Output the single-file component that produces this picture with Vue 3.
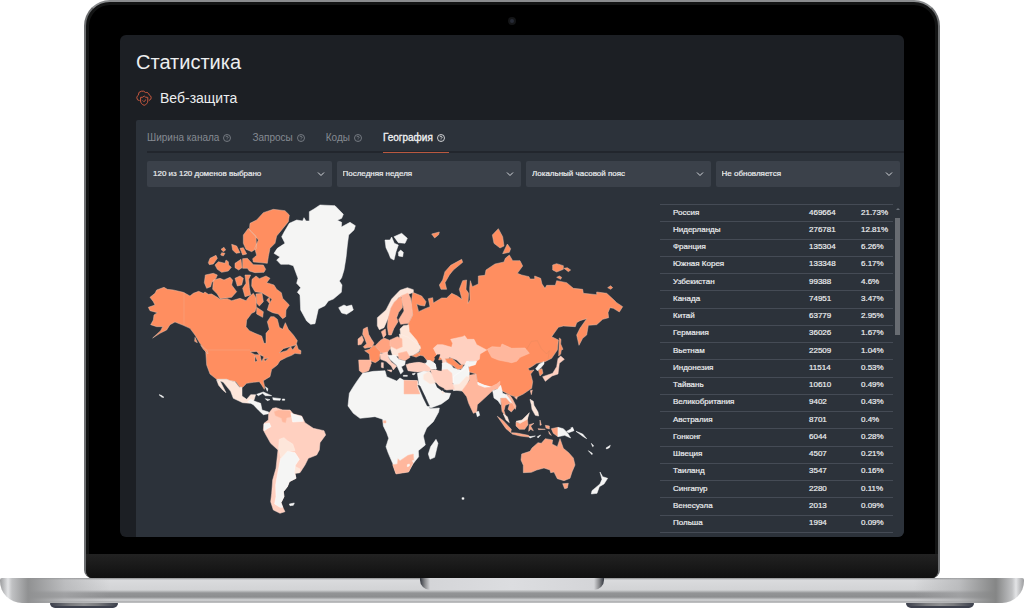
<script setup>
import { ref } from 'vue'

const tabs = ['Ширина канала', 'Запросы', 'Коды', 'География']
const active = ref('География')

const filters = [
  { id: 'domains', label: 'Домены', value: '120 из 120 доменов выбрано' },
  { id: 'period', label: 'Период', value: 'Последняя неделя' },
  { id: 'zone', label: 'Часовой пояс', value: 'Локальный часовой пояс' },
  { id: 'refresh', label: 'Обновление', value: 'Не обновляется' }
]

const rows = [
  ['Россия', '469664', '21.73%'],
  ['Нидерланды', '276781', '12.81%'],
  ['Франция', '135304', '6.26%'],
  ['Южная Корея', '133348', '6.17%'],
  ['Узбекистан', '99388', '4.6%'],
  ['Канада', '74951', '3.47%'],
  ['Китай', '63779', '2.95%'],
  ['Германия', '36026', '1.67%'],
  ['Вьетнам', '22509', '1.04%'],
  ['Индонезия', '11514', '0.53%'],
  ['Тайвань', '10610', '0.49%'],
  ['Великобритания', '9402', '0.43%'],
  ['Австралия', '8701', '0.4%'],
  ['Гонконг', '6044', '0.28%'],
  ['Швеция', '4507', '0.21%'],
  ['Таиланд', '3547', '0.16%'],
  ['Сингапур', '2280', '0.11%'],
  ['Венесуэла', '2013', '0.09%'],
  ['Польша', '1994', '0.09%']
]
</script>

<template>
  <div class="laptop">
    <div class="lid">
      <div class="camera-bar"><span class="camera"></span></div>
      <main class="screen">
        <h1>Статистика</h1>
        <h2>
          <svg class="cloud" viewBox="0 0 16 16" aria-hidden="true">
            <path d="M3.6 10.6A2.9 2.9 0 0 1 .8 7.8 2.8 2.8 0 0 1 2.4 5.2 3.6 3.6 0 0 1 5.4 1.2 4 4 0 0 1 9.6 2.6 2.7 2.7 0 0 1 13.2 5 2.9 2.9 0 0 1 15.2 7.8 2.8 2.8 0 0 1 13 10.4" />
            <path d="M8.2 6 9.6 7.2 11.8 7.4V11C11.8 13.2 10.2 14.6 8.2 15.3 6.2 14.6 4.6 13.2 4.6 11V7.4L6.8 7.2Z" />
            <path d="m6.6 10.4 1.3 1.3 2.2-2.2" />
          </svg>
          Веб-защита
        </h2>
        <section class="panel">
          <div class="tabs" role="tablist">
            <button v-for="tab in tabs" :key="tab" type="button" role="tab" class="tab"
              :class="{ active: tab === active }" :aria-selected="tab === active" @click="active = tab">
              {{ tab }}
              <svg class="help" viewBox="0 0 8 8" aria-hidden="true">
                <circle cx="4" cy="4" r="3.5" />
                <path d="M3 3.2a1 1 0 1 1 1.5.9Q4 4.3 4 4.8M4 5.6v.6" />
              </svg>
            </button>
          </div>
          <div class="filters">
            <div v-for="f in filters" :key="f.id" class="filter">
              <select :id="f.id" :aria-label="f.label"><option>{{ f.value }}</option></select>
              <svg class="chevron" viewBox="0 0 8 6" aria-hidden="true"><path d="m1 1.5 3 3 3-3" /></svg>
            </div>
          </div>
          <div class="content">
            <svg class="map" viewBox="147 195 500 330" role="img" aria-label="География запросов">
              <!-- North America -->
              <g class="top" transform="translate(140 200) scale(.33333)">
                <path d="M30 292 45 280 50 270 72 262 82 268 100 270 130 277 150 288 160 280 176 274 190 280 195 276 205 283 215 282 232 292 240 298 262 296 275 302 300 295 318 302 326 292 333 286 340 280 348 293 349 322 345 335 335 340 320 360 318 380 328 392 345 400 365 408 372 430 378 430 378 400 388 388 382 365 392 350 402 350 412 358 418 382 428 388 436 368 445 388 460 405 472 422 468 435 450 440 430 446 418 458 440 452 452 440 458 450 470 433 475 448 483 452 482 462 465 460 455 466 440 472 420 482 412 495 395 508 390 530 370 542 374 560 373 568 365 555 358 545 340 547 320 550 308 562 300 562 288 545 270 542 260 538 230 538 210 522 200 495 197 452 180 430 165 405 150 385 130 376 105 366 90 374 80 390 60 400 38 414 62 392 68 380 50 380 32 374 40 360 42 345 52 338 30 332 25 322 45 315 40 305Z" />
                <path d="M330 70 350 60 370 38 400 28 435 32 448 45 445 65 425 90 410 108 405 130 390 145 385 170 382 190 340 186 338 176 350 166 344 145 355 120 345 108 328 90ZM310 105 325 85 335 95 348 108 350 145 335 155 318 148 310 130ZM205 188 210 175 228 166 232 175 220 192 208 194ZM243 148 252 142 257 150 250 155ZM245 158 255 160 250 168 242 165ZM275 133 290 138 300 158 288 160 278 150ZM300 145 310 143 320 162 308 165ZM225 195 235 185 255 190 258 180 265 185 266 195 274 202 265 213 245 217 232 208ZM285 190 303 178 306 203 296 210 285 203ZM308 176 322 175 340 194 370 195 377 208 372 217 345 218 328 213 322 205 308 205ZM196 225 220 220 232 225 228 235 215 248 212 260 200 265 193 248ZM220 240 240 235 252 240 270 232 278 240 275 255 290 275 275 292 240 296 232 282 218 268ZM285 235 300 228 310 235 305 255 292 258ZM315 225 332 225 326 238 328 262 332 285 315 290 308 265 318 250ZM336 238 348 228 358 236 378 228 390 235 380 248 402 255 410 268 424 278 428 295 448 315 438 330 437 350 428 356 415 342 398 338 382 330 388 310 380 300 388 292 365 278 345 275 335 258ZM348 282 366 280 370 305 358 318 350 310ZM350 322 370 335 368 352 350 342ZM165 412 172 428 164 424ZM182 435 202 452 204 462 190 448Z" />
                <path class="lake" d="M330 456 350 454 358 464 345 464ZM345 468 352 482 345 486ZM360 464 372 470 365 485 362 475ZM372 478 385 474 375 484ZM388 292 396 298 390 308Z" />
                <path class="thin" d="M197 450H330M132 277V376M338 452 360 456 368 468" />
              </g>
              <!-- Central and South America -->
              <g transform="translate(200 350) scale(.33333)">
                <path class="faint" d="M50 88 80 88 90 92 105 95 118 112 126 112 126 138 140 148 152 134 167 134 162 150 150 160 128 158 100 145 92 124 70 97ZM50 90 60 92 78 128 68 120 56 106Z" />
                <path class="none" d="M143 155 152 148 168 155 182 160 186 180 206 186 206 191 190 194 175 180 160 164ZM170 133 190 126 215 137 196 137 188 130 175 137ZM218 143 242 146 240 151 220 150ZM196 146 210 149 202 152ZM247 147h7v4h-7ZM196 110 204 116 202 124ZM268 462 283 459 280 466 270 467Z" />
                <path class="low" d="M206 190 218 175 228 173 248 180 270 180 280 192 305 198 315 218 340 235 372 242 377 255 360 278 358 300 350 315 325 325 315 345 300 368 285 370 288 385 268 395 262 410 250 425 252 440 243 458 250 475 255 485 240 490 220 480 212 455 215 430 218 390 228 355 234 300 212 280 198 255 190 240 192 220 205 210Z" />
                <path class="mid" d="M222 185 235 180 270 182 275 200 260 204 257 218 247 216 244 205 226 197Z" />
                <path class="none" d="M273 190 285 194 305 200 310 214 278 216ZM192 222 208 219 213 230 202 236 193 242ZM242 325 262 303 285 308 298 328 286 346 284 370 288 385 268 395 262 410 250 425 252 440 243 458 248 472 240 472 224 462 228 440 227 405 233 370Z" />
                <path class="faint" d="M238 268 252 263 262 272 278 282 285 302 262 303 243 325 236 295ZM286 350 300 357 297 368 284 370Z" />
              </g>
              <!-- Greenland, Iceland, Svalbard -->
              <g class="none" transform="translate(270 195) scale(.33333)">
                <path d="M118 50 132 42 150 30 195 32 220 58 215 70 202 76 215 82 214 96 240 82 256 92 252 105 236 120 232 150 228 188 222 225 215 248 208 258 216 270 214 292 190 312 175 318 165 332 145 342 135 386 122 388 110 378 92 345 90 300 82 292 92 278 80 265 84 250 70 212 56 208 32 208 20 195 30 186 12 175 22 160 45 145 35 125 42 112 58 85 80 75 98 78 102 68 108 78 118 78ZM206 338 222 330 230 334 245 330 250 345 230 358 215 354ZM345 135 360 135 365 126 373 145 385 150 378 170 372 195 362 190 356 175 348 158ZM372 125 395 115 412 130 405 145 385 143ZM385 172 392 165 400 172 398 185 386 183Z" />
              </g>
              <!-- Russia and China -->
              <g transform="translate(430 220) scale(.33333)">
                <path class="top" d="M-52 217 -25 228 -12 245 -16 258 -30 256 -40 252 -34 275 -15 266 0 260 -5 236 8 233 10 249 35 234 50 234 65 220 82 228 96 238 88 208 98 182 110 180 108 208 116 220 114 250 120 240 119 205 121 182 127 200 145 192 145 168 165 166 168 150 195 132 222 126 226 115 238 105 248 122 270 122 278 138 262 160 275 165 297 170 300 177 314 177 314 168 332 175 336 192 345 205 350 196 376 196 380 182 410 188 430 205 458 208 460 220 500 224 500 216 530 220 552 240 560 248 578 260 568 276 550 265 540 263 534 278 536 293 518 298 500 314 475 316 470 345 458 355 447 376 440 345 450 325 470 296 450 302 440 308 436 320 400 318 385 322 365 350 385 360 382 390 365 415 345 425 320 430 305 440 294 446 300 452 312 450 302 462 308 485 305 505 280 522 260 532 240 525 215 512 195 507 160 500 142 487 138 462 115 455 118 432 140 422 130 400 40 405 45 418 22 420 18 408 10 425 -10 420 -20 408 -45 403 -30 395 -30 375 -60 355 -72 335 -65 310 -52 285 -57 255Z" />
                <path class="top" d="M28 195 38 180 45 155 62 136 95 118 98 127 70 150 58 165 45 188 50 208 33 208ZM187 45 205 26 218 50 222 78 210 84 192 70ZM232 72 242 86 238 97 218 101ZM368 135 380 131 400 137 400 148 380 156 368 150ZM402 145 412 143 422 150 415 155ZM380 172 388 168 395 172 392 178ZM533 203 542 197 548 203 542 208ZM5 42 28 36 26 44 14 54ZM388 354 393 358 392 372 399 388 394 390 392 402 386 408Z" />
                <path class="low" d="M10 385 22 374 38 374 65 382 68 370 62 358 98 350 104 347 112 358 132 358 140 374 170 390 150 402 148 418 138 424 118 424 110 432 96 436 80 420 58 412 47 430 38 430 36 416 20 404Z" />
                <path class="mid" d="M172 388 186 380 212 382 216 372 245 385 285 384 298 400 270 412 260 424 245 428 205 420 185 412Z" />
                <path class="none" d="M-20 420 0 422 16 432 20 446 0 448ZM36 430 58 426 70 444 92 450 104 436 110 424 140 424 136 434 115 440 118 460 102 478 90 492 66 488 64 464 34 450Z" />
                <path class="top" d="M45 416 65 414 78 426 90 436 100 432 96 446 82 448 70 438 52 428ZM325 450 336 446 339 460 330 468Z" />
                <path class="none" d="M317 446 328 432 342 425 342 432 332 444 322 452ZM142 488 160 496 185 501 182 505 160 502 144 494Z" />
                <path class="low" d="M338 470 368 460 380 440 384 416 392 408 403 418 388 430 384 462 366 468 346 484Z" />
                <path class="fine" d="M290 388 304 364 322 362 334 386 350 402 358 392 354 418" />
              </g>
              <!-- Scandinavia and the British Isles -->
              <g transform="translate(270 195) scale(.33333)">
                <path class="faint" d="M322 368 348 345 365 312 390 286 412 278 430 284 430 292 410 300 385 308 368 335 352 375 342 398 328 404 322 392Z" />
                <path class="upper" d="M372 322 392 304 398 318 397 338 386 352 380 368 384 380 372 400 364 420 356 420 352 396 354 372 362 340Z" />
                <path class="mid" d="M394 302 414 294 422 310 428 360 415 385 392 388 386 374 402 348 398 325ZM334 410 346 402 348 420 340 428ZM264 432 276 422 281 436 274 448 264 450Z" />
                <path class="upper" d="M280 402 292 396 296 418 304 432 312 444 306 456 284 460 280 455 290 446 284 430 278 418Z" />
                <path class="faint" d="M390 402 400 392 416 390 418 410 440 436 452 460 432 466 396 452Z" />
              </g>
              <!-- Europe, Africa, Middle East and India -->
              <g transform="translate(330 330) scale(.33333)">
                <path class="faint" d="M180 52 210 30 208 12 235 22 270 48 268 64 250 76 225 80 188 78Z" />
                <path class="upper" d="M135 48 150 32 162 24 182 32 182 54 170 70 150 68Z" />
                <path class="mid" d="M180 30 202 20 216 26 217 50 200 58 180 48ZM205 70 230 64 240 82 225 92 206 86Z" />
                <path class="top" d="M104 62 118 58 132 46 152 66 148 90 136 98 120 92 118 72ZM246 78 262 70 270 76 258 82Z" />
                <path class="mid" d="M86 90 122 90 124 100 116 122 98 129 88 122Z" />
                <path class="low" d="M150 72 172 66 176 84 184 96 200 108 190 120 184 108 168 94 152 88ZM154 98 160 98 160 114 154 112ZM172 120 186 120 184 126ZM228 104 245 98 270 96 302 106 300 124 262 126 234 122Z" />
                <path class="none" d="M174 76 196 76 206 88 226 94 224 105 214 110 220 124 212 132 200 106 180 88ZM220 136h12v3h-12ZM246 132 256 129 252 135Z" />
                <path class="none" d="M282 92 300 92 314 100 318 118 302 114 288 102ZM262 130 282 124 300 126 312 152 322 172 334 178 342 188 362 190 356 206 334 222 302 234 294 226 286 200 268 168ZM370 140 412 110 420 142 398 176 370 182Z" />
                <path class="faint" d="M280 134 296 124 310 134 318 160 300 162 280 148ZM368 164 388 162 410 138 420 144 402 184 372 180ZM334 182 344 188 338 192Z" />
                <path class="low" d="M300 118 316 120 334 120 352 118 366 130 368 160 374 178 350 180 330 172 312 150Z" />
                <path class="none" d="M98 130 130 124 165 122 170 140 200 153 210 144 222 151 262 152 268 170 284 202 300 236 328 234 326 246 310 275 290 294 280 318 286 345 265 362 266 380 250 400 235 425 198 430 188 400 175 370 168 350 176 325 170 308 160 288 158 268 135 260 90 265 70 250 54 228 58 190 70 170 82 152ZM318 328 324 340 314 382 300 388 295 372 302 350ZM438 246 446 244 449 256 442 260Z" />
                <path class="mid" d="M222 151 262 152 262 170 270 192H222ZM188 404 202 402 204 386 210 392 234 376 250 372 252 394 236 426 198 432ZM160 272h8v7h-8Z" />
                <path class="mid" d="M396 182 418 152 418 136 438 132 442 156 452 166 480 172 500 162 510 154 508 170 486 184 460 208 442 224 440 246 430 250 416 220 410 200Z" />
                <path class="none" d="M232 404 238 402 238 408 232 410ZM247 392 252 392 251 398ZM443 157 464 166 478 170 464 172 444 164Z" />
                <path class="sea" d="M238 94 248 80 262 86 274 82 290 92 288 98 262 94 242 98ZM314 82 322 74 330 74 324 90 335 104 334 122 322 120 320 102ZM264 166 270 168 298 228 292 228 280 204ZM316 158 326 168 342 176 336 182 322 172Z" />
              </g>
              <!-- South-East Asia and Oceania -->
              <g transform="translate(470 370) scale(.33333)">
                <path class="none" d="M68 62 82 58 92 46 98 70 110 74 126 90 130 104 120 98 108 86 92 84 92 104 84 92 72 84Z" />
                <path class="upper" d="M92 84 108 84 122 100 106 106 102 122 108 142 96 124ZM120 98 130 100 136 112 124 126 114 118ZM82 139 100 152 124 178 122 188 108 176ZM124 188 140 189 175 196 182 202 150 198 126 192ZM138 156 150 160 172 144 174 164 164 178 148 178 138 168ZM178 164 192 160 182 168 190 182 182 178 176 184ZM210 150 214 165 210 166ZM204 176 226 178 206 179ZM226 166 238 168 238 177 228 174ZM236 184 244 196 238 192ZM244 176 264 172 264 200 250 190Z" />
                <path class="mid" d="M108 72 120 76 128 88 138 108 136 118 130 104 118 84ZM134 82 142 80 140 88ZM181 62 187 60 184 74Z" />
                <path class="faint" d="M100 132 112 140 118 158 108 150ZM138 154 156 150 178 128 172 148 150 160ZM180 88 190 94 192 106 204 126 206 138 196 136 186 118 184 104Z" />
                <path class="none" d="M264 172 280 176 292 188 302 204 284 196 264 200ZM290 184 308 174 312 182 296 188ZM302 174 308 172 310 180ZM318 184 338 192 350 206 340 200ZM364 220 371 228 368 230ZM355 242 367 250 366 254ZM408 234 421 226 418 233 410 237ZM390 306 398 320 413 325 402 342 388 350 381 370 364 372 366 362 390 342 396 328ZM178 200 196 198 180 204ZM202 200 212 195 204 204Z" />
                <path class="upper" d="M155 252 180 244 186 234 204 218 214 220 226 206 248 210 246 222 262 230 270 206 280 235 296 248 310 264 315 285 306 306 300 325 282 332 262 326 252 306 242 308 240 300 222 294 200 300 184 307 160 308 160 286 153 270ZM278 341 295 340 292 354 284 356Z" />
              </g>
              <g class="none" transform="translate(140 370) scale(.33333)">
                <path d="M57 74 64 76 72 82 66 82ZM966 383h6v5h-6Z" />
              </g>
            </svg>
            <div class="list">
              <table>
                <tbody>
                  <tr v-for="r in rows" :key="r[0]">
                    <td>{{ r[0] }}</td><td>{{ r[1] }}</td><td>{{ r[2] }}</td>
                  </tr>
                </tbody>
              </table>
              <div class="scroll" aria-hidden="true"><i class="up"></i><i class="thumb"></i></div>
            </div>
          </div>
        </section>
      </main>
      <div class="bezel"></div>
      <div class="chin"></div>
    </div>
    <div class="base"><div class="notch"></div></div>
    <div class="feet"><i></i><i></i></div>
  </div>
</template>

<style>
body { background: #fff; }
</style>

<style scoped>
* { box-sizing: border-box; }
.laptop { display: flex; flex-direction: column; font-family: "Liberation Sans", Arial, sans-serif; color: #eceef0; }
.lid {
  margin: 0 84px;
  border: 2px solid #6d6f71;
  border-top-color: #8a8c8e;
  border-bottom: 0;
  border-radius: 26px 26px 8px 8px;
  background: #000;
  overflow: hidden;
  box-shadow: inset 0 0 0 3px #131414;
}
.camera-bar { height: 33px; display: flex; justify-content: center; align-items: center; padding-top: 4px; }
.camera { width: 8px; height: 8px; border-radius: 50%; background: #262a36; border: 2px solid #141517; }
.screen { margin: 0 34px; background: #1c1f24; border-radius: 6px; overflow: hidden; padding: 15px 0 0 16px; }
h1 { margin: 0; font-size: 20px; line-height: 24px; font-weight: 400; }
h2 { margin: 14px 0 12px; display: flex; align-items: center; gap: 8px; font-size: 14px; line-height: 20px; font-weight: 400; }
.cloud { width: 16px; height: 16px; fill: none; stroke: #c7583f; stroke-width: 1; stroke-linejoin: round; }
.panel { background: #2c323a; border-radius: 2px 0 0 0; padding: 0 0 4px 11px; }
.tabs { display: flex; gap: 21px; height: 33px; border-bottom: 2px solid #22262d; }
.tab {
  display: flex; align-items: center; gap: 4px; height: 33px; padding: 3px 0 0; border: 0;
  border-bottom: 1px solid transparent; background: none;
  font: 400 10px/15px "Liberation Sans", Arial, sans-serif; color: #858a92;
}
.tab.active { color: #f2f3f4; border-bottom-color: #b9583f; padding-right: 4px; -webkit-text-stroke: .3px currentColor; }
.help { width: 8px; height: 8px; fill: none; stroke: currentColor; stroke-width: .8; }
.filters { display: grid; grid-template-columns: repeat(4, 1fr); gap: 5px; margin: 8px 4px 8px 0; }
.filter { position: relative; }
.filter select {
  display: block; width: 100%; height: 26px; padding: 0 20px 0 6px; border: 0; border-radius: 2px;
  appearance: none; background: #3b414a; color: #eceef0;
  font: 400 8px/12px "Liberation Sans", Arial, sans-serif; -webkit-text-stroke: .2px currentColor;
}
.chevron { position: absolute; right: 7px; top: 10px; width: 8px; height: 6px; fill: none; stroke: #d5d8dc; stroke-width: 1; pointer-events: none; }
.content { display: flex; gap: 13px; align-items: flex-start; margin-right: 4px; }
.map { flex: 1; min-width: 0; height: auto; display: block; stroke-linejoin: round; }
.map path { stroke-width: 1.5; }
.map .top { fill: #ff8e60; stroke: #e5c0ae; }
.map .upper { fill: #ffa27f; stroke: #efc9b8; }
.map .mid { fill: #ffb79d; stroke: #ffc6b0; }
.map .low { fill: #ffd0c0; stroke: #ffdace; }
.map .faint { fill: #fde6da; stroke: #fdeee6; }
.map .none { fill: #f5f5f4; stroke: #fff; }
.map .sea { fill: #2c323a; stroke: #2c323a; }
.map .lake { fill: #2c323a; stroke: #e5c0ae; }
.map .thin { fill: none; stroke: #f3a688; }
.map .fine { fill: none; stroke: #e9895d; }
.list { flex: 0 0 240px; display: flex; gap: 2px; margin-top: 9px; }
table { flex: 1; height: 329px; border-collapse: collapse; font-size: 8px; line-height: 10px; border-top: 1px solid #454b55; -webkit-text-stroke: .2px currentColor; }
tr { border-bottom: 1px solid #454b55; }
td { padding: 0 0 1px; vertical-align: middle; }
td:first-child { padding-left: 13px; }
td:nth-child(2) { width: 52px; }
td:nth-child(3) { width: 32px; }
.scroll { width: 5px; display: flex; flex-direction: column; align-items: center; gap: 8px; padding-top: 4px; }
.up { border: 2px solid transparent; border-top: 0; border-bottom-color: #6c727a; }
.thumb { width: 5px; height: 117px; background: #686c72; }
.bezel { height: 17px; }
.chin { height: 24px; background: linear-gradient(#222, #101010); }
.base {
  height: 25px; display: flex; justify-content: center; border-radius: 2px 2px 22px 22px;
  background:
    linear-gradient(90deg, #9b9c9e 0, #e3e4e6 8px, #c0c1c3 12px, #909192 28px, rgba(170, 171, 173, .6) 65px, transparent 110px, transparent calc(100% - 110px), rgba(170, 171, 173, .6) calc(100% - 65px), #858686 calc(100% - 28px), #c0c1c3 calc(100% - 12px), #e3e4e6 calc(100% - 8px), #9b9c9e 100%),
    linear-gradient(#8b8c8e 0, #dadbdd 2px, #d2d3d5 12px, #939496 15px, #8c8d8f 19px, #d5d6d8 22px, #a8a9ab 24px, #d0d1d3 25px);
}
.notch {
  width: 184px; height: 12px; border-radius: 0 0 10px 10px;
  background: linear-gradient(90deg, #30343c 0, #8b8c8f 5px, #d4d5d8 10px, #dcdde0 50%, #d4d5d8 calc(100% - 10px), #8b8c8f calc(100% - 5px), #30343c 100%);
}
.feet { display: flex; justify-content: space-between; padding: 0 50px; }
.feet i { width: 68px; height: 5px; border-radius: 0 0 5px 5px; background: linear-gradient(90deg, #3b3f4b, #7a7b7e 30%, #8e8f91 50%, #7a7b7e 70%, #3b3f4b); border-bottom: 2px solid #3d414e; }
</style>
